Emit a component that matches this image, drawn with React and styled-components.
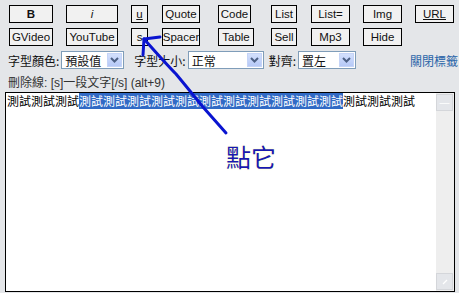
import styled, { createGlobalStyle } from "styled-components"

const Global = createGlobalStyle`
  html, body {
    margin: 0;
    padding: 0;
    background: #e4e6e9;
    overflow: hidden;
  }
`;

const Page = styled.div`
  position: relative;
  width: 459px;
  height: 293px;
  background: #e4e6e9;
  font-family: "Liberation Sans", "Noto Sans CJK TC", sans-serif;
  overflow: hidden;
`;

const Toolbar = styled.div`
  display: grid;
  grid-template-columns: 57px 65px 31px 56px 53px 40px 52px 52px 44px;
  grid-auto-rows: 18px;
  row-gap: 5px;
  padding: 5px 0 0 9px;
`;

const Button = styled.div`
  box-sizing: border-box;
  width: ${p => p.$w}px;
  height: 18px;
  border: 1px solid #000;
  background: #f1f1f1;
  display: flex;
  align-items: center;
  justify-content: center;
  font-size: 11.5px;
  color: #111;
  font-weight: ${p => (p.$bold ? 700 : 400)};
  font-style: ${p => (p.$italic ? "italic" : "normal")};
  text-decoration: ${p => (p.$under ? "underline" : "none")};
`;

const Options = styled.div`
  display: flex;
  align-items: center;
  height: 18px;
  margin-top: 5px;
  padding-left: 8px;
  white-space: nowrap;
  font-family: "Noto Sans CJK TC", sans-serif;
  font-size: 12px;
  color: #111;
`;

const Label = styled.span`
  margin-left: ${p => p.$ml || 0}px;
  margin-right: 2px;
`;

const Select = styled.div`
  box-sizing: border-box;
  width: ${p => p.$w}px;
  height: 18px;
  border: 1px solid #7f9db9;
  background: #fff;
  display: flex;
  align-items: center;
  justify-content: space-between;
  padding-left: 3px;
  font-size: 12px;
`;

const Arrow = styled.div`
  width: 15px;
  height: 14px;
  margin-right: 1px;
  background: linear-gradient(#d3e0fd, #b6c9f7);
  border: 1px solid #c5d4f7;
  box-sizing: border-box;
  display: flex;
  align-items: center;
  justify-content: center;
`;

const CloseLink = styled.span`
  margin-left: 54px;
  color: #2a64a8;
  font-size: 12px;
`;

const Hint = styled.div`
  padding: 4px 0 0 8px;
  height: 17px;
  font-family: "Liberation Sans", "Noto Sans CJK TC", sans-serif;
  font-size: 12px;
  color: #333;
  white-space: nowrap;
`;

const Editor = styled.div`
  box-sizing: border-box;
  margin: 2px 0 0 5px;
  width: 450px;
  height: 200px;
  border: 1px solid #000;
  background: #fff;
  display: flex;
`;

const Content = styled.div`
  flex: 1;
  padding: 1px 0 0 1px;
  font-family: "Noto Sans CJK TC", sans-serif;
  font-size: 12px;
  line-height: 14px;
  color: #000;
  white-space: nowrap;
  overflow: hidden;
`;

const Selected = styled.span`
  background: #316ac5;
  color: #fff;
`;

const Scrollbar = styled.div`
  width: 17px;
  background: #eeeeee;
  display: flex;
  flex-direction: column;
  justify-content: space-between;
  padding: 1px 1px 1px 0;
`;

const ScrollBtn = styled.div`
  height: 17px;
  box-sizing: border-box;
  border: 1px solid #d4d6da;
  background: #e4e6ea;
  display: flex;
  align-items: center;
  justify-content: center;
  color: #fff;
  font-size: 10px;
`;

const Overlay = styled.svg`
  position: absolute;
  left: 0;
  top: 0;
  pointer-events: none;
`;

const Callout = styled.div`
  position: absolute;
  left: 226px;
  top: 138px;
  font-family: "Noto Sans CJK TC", sans-serif;
  font-weight: 400;
  font-size: 25px;
  color: #1818b0;
  text-shadow: 0 0 2px #ffffb0;
`;

const row1 = [
  { t: "B", w: 44, bold: true },
  { t: "i", w: 52, italic: true },
  { t: "u", w: 17, under: true },
  { t: "Quote", w: 38 },
  { t: "Code", w: 33 },
  { t: "List", w: 26 },
  { t: "List=", w: 39 },
  { t: "Img", w: 39 },
  { t: "URL", w: 39, under: true },
];

const row2 = [
  { t: "GVideo", w: 44 },
  { t: "YouTube", w: 52 },
  { t: "s", w: 17 },
  { t: "Spacer", w: 38 },
  { t: "Table", w: 36 },
  { t: "Sell", w: 26 },
  { t: "Mp3", w: 39 },
  { t: "Hide", w: 39 },
];

const Chevron = () => (
  <svg width="9" height="6" viewBox="0 0 9 6">
    <path d="M1 1 L4.5 4.5 L8 1" stroke="#4d6185" strokeWidth="2" fill="none" />
  </svg>
);

const pair = "測試";

export default function App() {
  return (
    <Page>
      <Global />
      <Toolbar>
        {row1.map(b => (
          <Button key={b.t} $w={b.w} $bold={b.bold} $italic={b.italic} $under={b.under}>
            {b.t}
          </Button>
        ))}
        {row2.map(b => (
          <Button key={b.t} $w={b.w}>
            {b.t}
          </Button>
        ))}
      </Toolbar>
      <Options>
        <Label>字型顏色:</Label>
        <Select $w={63}>預設值<Arrow><Chevron /></Arrow></Select>
        <Label $ml={10}>字型大小:</Label>
        <Select $w={76}>正常<Arrow><Chevron /></Arrow></Select>
        <Label $ml={5}>對齊:</Label>
        <Select $w={58}>置左<Arrow><Chevron /></Arrow></Select>
        <CloseLink>關閉標籤</CloseLink>
      </Options>
      <Hint>刪除線: [s]一段文字[/s] (alt+9)</Hint>
      <Editor>
        <Content>
          {pair.repeat(3)}
          <Selected>{pair.repeat(11)}</Selected>
          {pair.repeat(3)}
        </Content>
        <Scrollbar>
          <ScrollBtn>—</ScrollBtn>
          <ScrollBtn>
            <svg width="8" height="8" viewBox="0 0 8 8">
              <path d="M2 6 L6 2" stroke="#fff" strokeWidth="1.2" />
            </svg>
          </ScrollBtn>
        </Scrollbar>
      </Editor>
      <Overlay width="459" height="293" viewBox="0 0 459 293">
        <path
          d="M144 39 C 160 57, 168 66, 176 74 C 186 86, 194 96, 203 107 C 211 116, 218 124, 226 133"
          stroke="#0a14d0"
          strokeWidth="3"
          fill="none"
          strokeLinecap="round"
        />
        <path d="M144 39 L160 37" stroke="#0a14d0" strokeWidth="3" strokeLinecap="round" />
        <path d="M144 39 L143 55" stroke="#0a14d0" strokeWidth="3" strokeLinecap="round" />
      </Overlay>
      <Callout>點它</Callout>
    </Page>
  )
}
